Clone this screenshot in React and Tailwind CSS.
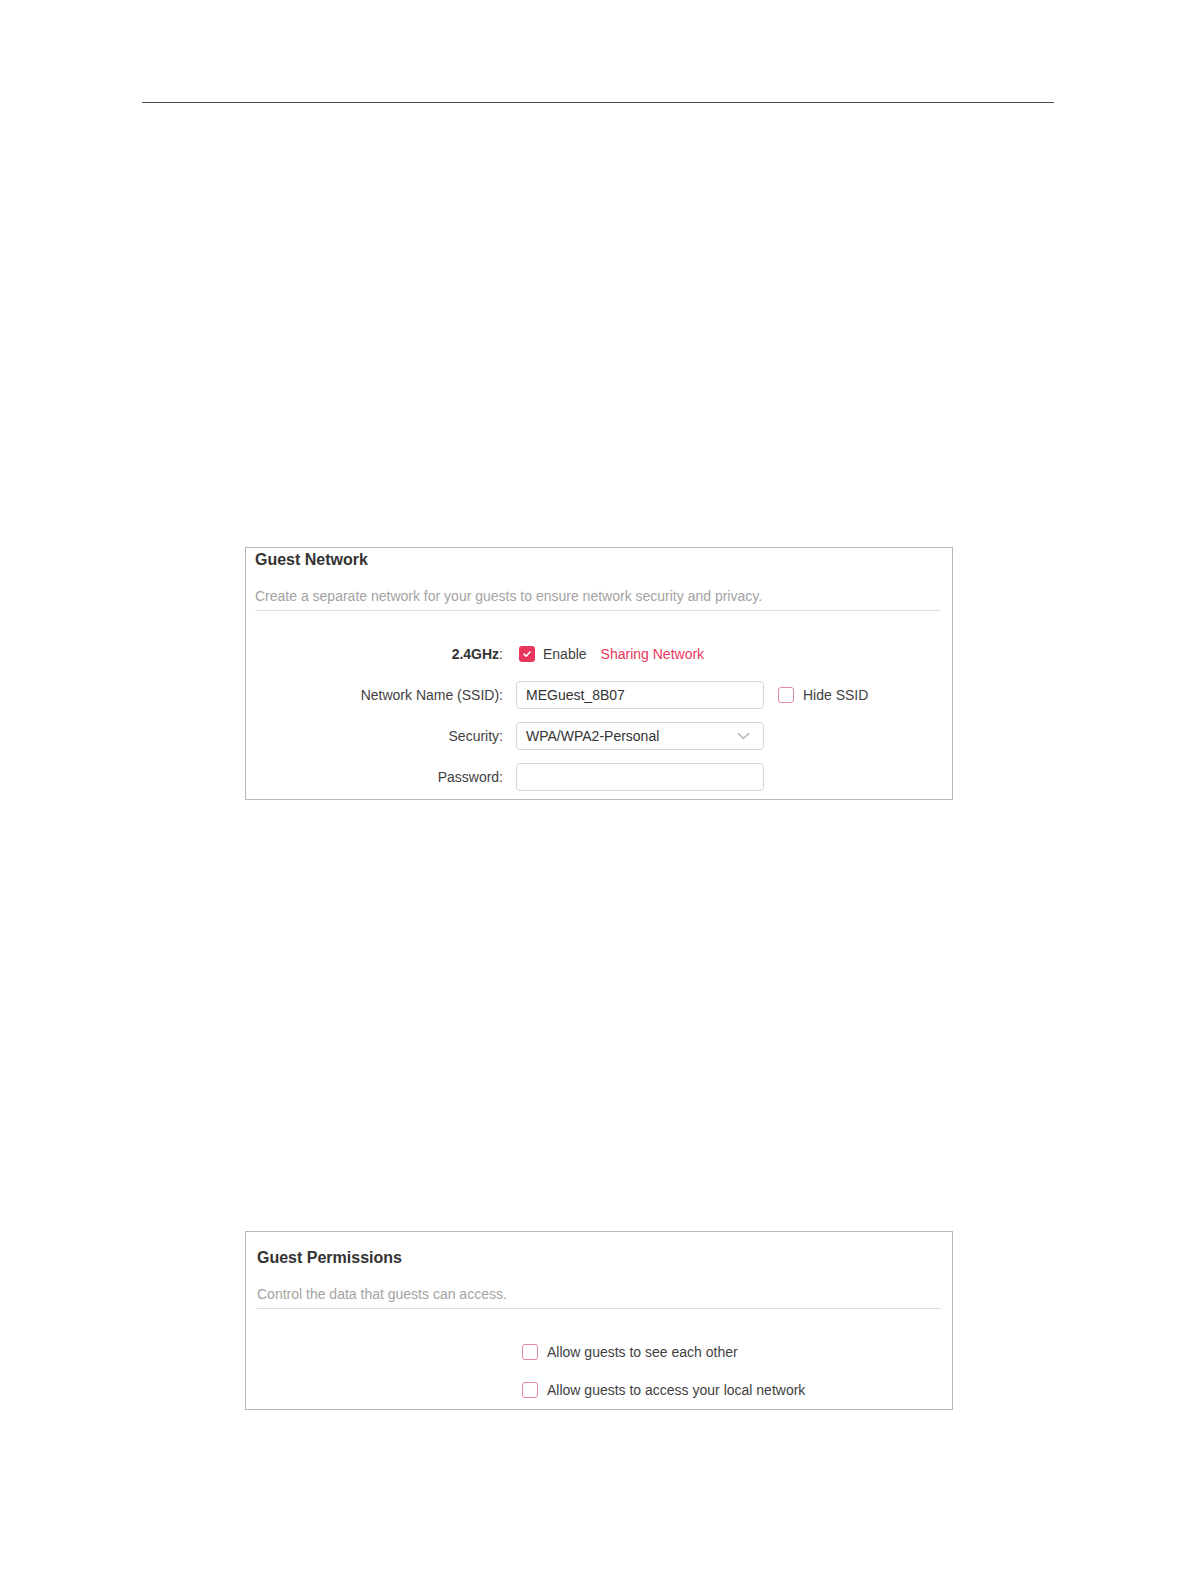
import React from 'react';

const font = "font-['Liberation_Sans',Arial,sans-serif]";

function Box({ checked }) {
  if (checked) {
    return (
      <span className="w-4 h-4 rounded-[3px] bg-[#e8365c] flex items-center justify-center shrink-0">
        <svg width="10" height="10" viewBox="0 0 10 10" fill="none">
          <path d="M2 5.2 L4.1 7.2 L8 3" stroke="white" strokeWidth="1.6" strokeLinecap="round" strokeLinejoin="round" />
        </svg>
      </span>
    );
  }
  return <span className="block w-4 h-4 rounded-[3px] border border-[#e38aa0] bg-white shrink-0" />;
}

function Row({ label, children }) {
  return (
    <div className="flex items-center h-7">
      <div className="w-[248px] text-right text-[14px] text-[#3f3f3f]">{label}</div>
      <div className="ml-[13px] flex items-center h-7">{children}</div>
    </div>
  );
}

function Field({ value, select }) {
  return (
    <div className="w-[248px] h-7 border border-[#d6d6d6] rounded-[4px] bg-white flex items-center pl-[9px] pr-3 text-[14px] text-[#333]">
      <span className="flex-1">{value}</span>
      {select && (
        <svg width="13" height="8" viewBox="0 0 13 8" fill="none" className="mr-[1px]">
          <path d="M1 1.2 L6.5 6.5 L12 1.2" stroke="#a8a8a8" strokeWidth="1.2" />
        </svg>
      )}
    </div>
  );
}

export default function App() {
  return (
    <div className={`w-[1196px] h-[1582px] bg-white ${font}`}>
      {/* page rule */}
      <div className="pt-[102px] pl-[142px]">
        <div className="w-[912px] h-px bg-[#4a4a4a]" />
      </div>

      {/* Guest Network */}
      <section className="ml-[245px] mt-[444px] w-[708px] border border-[#b8b8b8] pl-[9px] pr-[12px] pt-[2px] pb-[8px]">
        <h2 className="text-[16px] leading-[20px] font-bold text-[#333]">Guest Network</h2>
        <p className="mt-4 text-[14px] leading-[20px] text-[#a3a3a3]">
          Create a separate network for your guests to ensure network security and privacy.
        </p>
        <div className="mt-1 h-px bg-[#dcdcdc]" />

        <div className="mt-[29px] flex flex-col gap-[13px]">
          <Row label={<><span className="font-bold text-[#333]">2.4GHz</span>:</>}>
            <span className="ml-[3px]"><Box checked /></span>
            <span className="ml-2 text-[14px] text-[#3f3f3f]">Enable</span>
            <span className="ml-[14px] text-[14px] text-[#e8365c]">Sharing Network</span>
          </Row>
          <Row label="Network Name (SSID):">
            <Field value="MEGuest_8B07" />
            <span className="ml-[14px]"><Box /></span>
            <span className="ml-[9px] text-[14px] text-[#3f3f3f]">Hide SSID</span>
          </Row>
          <Row label="Security:">
            <Field value="WPA/WPA2-Personal" select />
          </Row>
          <Row label="Password:">
            <Field value="" />
          </Row>
        </div>
      </section>

      {/* Guest Permissions */}
      <section className="ml-[245px] mt-[431px] w-[708px] border border-[#b8b8b8] px-[11px] pt-4 pb-[9px]">
        <h2 className="text-[16px] leading-[20px] font-bold text-[#333]">Guest Permissions</h2>
        <p className="mt-4 text-[14px] leading-[20px] text-[#a3a3a3]">Control the data that guests can access.</p>
        <div className="mt-1 h-px bg-[#dcdcdc]" />

        <div className="mt-[33px] ml-[265px] flex flex-col gap-[18px]">
          <label className="flex items-center h-5 gap-[9px] text-[14px] text-[#3f3f3f]">
            <Box />
            Allow guests to see each other
          </label>
          <label className="flex items-center h-5 gap-[9px] text-[14px] text-[#3f3f3f]">
            <Box />
            Allow guests to access your local network
          </label>
        </div>
      </section>
    </div>
  );
}
